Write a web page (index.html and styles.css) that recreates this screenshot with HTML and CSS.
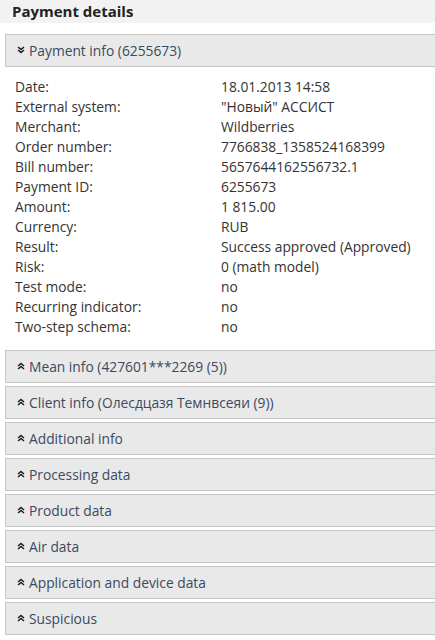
FILE: index.html
```html
<!DOCTYPE html>
<html>
<head>
<meta charset="utf-8">
<link rel="stylesheet" href="styles.css">
</head>
<body>
<div class="page">
  <div class="title">Payment details</div>
  <div class="panels">
    <div class="panel">
      <div class="phead"><svg class="ico" viewBox="0 0 8 8"><path d="M1 1 L4 3.5 L7 1 M1 4 L4 6.5 L7 4" fill="none" stroke="#222" stroke-width="1.6"/></svg><span>Payment info (6255673)</span></div>
      <div class="pbody">
        <div class="row"><span>Date:</span><span>18.01.2013 14:58</span></div>
        <div class="row"><span>External system:</span><span>"Новый" АССИСТ</span></div>
        <div class="row"><span>Merchant:</span><span>Wildberries</span></div>
        <div class="row"><span>Order number:</span><span>7766838_1358524168399</span></div>
        <div class="row"><span>Bill number:</span><span>5657644162556732.1</span></div>
        <div class="row"><span>Payment ID:</span><span>6255673</span></div>
        <div class="row"><span>Amount:</span><span>1 815.00</span></div>
        <div class="row"><span>Currency:</span><span>RUB</span></div>
        <div class="row"><span>Result:</span><span>Success approved (Approved)</span></div>
        <div class="row"><span>Risk:</span><span>0 (math model)</span></div>
        <div class="row"><span>Test mode:</span><span>no</span></div>
        <div class="row"><span>Recurring indicator:</span><span>no</span></div>
        <div class="row"><span>Two-step schema:</span><span>no</span></div>
      </div>
    </div>
    <div class="panel"><div class="phead"><svg class="ico" viewBox="0 0 8 8"><path d="M1 4 L4 1.5 L7 4 M1 7 L4 4.5 L7 7" fill="none" stroke="#222" stroke-width="1.6"/></svg><span>Mean info (427601***2269 (5))</span></div></div>
    <div class="panel"><div class="phead"><svg class="ico" viewBox="0 0 8 8"><path d="M1 4 L4 1.5 L7 4 M1 7 L4 4.5 L7 7" fill="none" stroke="#222" stroke-width="1.6"/></svg><span>Client info (Олесдцазя Темнвсеяи (9))</span></div></div>
    <div class="panel"><div class="phead"><svg class="ico" viewBox="0 0 8 8"><path d="M1 4 L4 1.5 L7 4 M1 7 L4 4.5 L7 7" fill="none" stroke="#222" stroke-width="1.6"/></svg><span>Additional info</span></div></div>
    <div class="panel"><div class="phead"><svg class="ico" viewBox="0 0 8 8"><path d="M1 4 L4 1.5 L7 4 M1 7 L4 4.5 L7 7" fill="none" stroke="#222" stroke-width="1.6"/></svg><span>Processing data</span></div></div>
    <div class="panel"><div class="phead"><svg class="ico" viewBox="0 0 8 8"><path d="M1 4 L4 1.5 L7 4 M1 7 L4 4.5 L7 7" fill="none" stroke="#222" stroke-width="1.6"/></svg><span>Product data</span></div></div>
    <div class="panel"><div class="phead"><svg class="ico" viewBox="0 0 8 8"><path d="M1 4 L4 1.5 L7 4 M1 7 L4 4.5 L7 7" fill="none" stroke="#222" stroke-width="1.6"/></svg><span>Air data</span></div></div>
    <div class="panel"><div class="phead"><svg class="ico" viewBox="0 0 8 8"><path d="M1 4 L4 1.5 L7 4 M1 7 L4 4.5 L7 7" fill="none" stroke="#222" stroke-width="1.6"/></svg><span>Application and device data</span></div></div>
    <div class="panel"><div class="phead"><svg class="ico" viewBox="0 0 8 8"><path d="M1 4 L4 1.5 L7 4 M1 7 L4 4.5 L7 7" fill="none" stroke="#222" stroke-width="1.6"/></svg><span>Suspicious</span></div></div>
  </div>
</div>
</body>
</html>
```
FILE: styles.css
```css
html, body {
  margin: 0;
  padding: 0;
  background: #fff;
  overflow: hidden;
}
body {
  font-family: "Open Sans", "Noto Sans", sans-serif;
  font-size: 13.8px;
  color: #333;
}
.page {
  width: 460px;
}
.title {
  height: 23px;
  background: #f2f2f2;
  padding-left: 12px;
  font-weight: bold;
  font-size: 15px;
  line-height: 23px;
  color: #222;
}
.panels {
  padding: 11px 0 0 5px;
  display: flex;
  flex-direction: column;
  gap: 3px;
}
.phead {
  height: 31px;
  border: 1px solid #c6c6c6;
  background: #e9e9e9;
  display: flex;
  align-items: center;
  padding-left: 11px;
  color: #3b4a5e;
}
.ico {
  width: 8px;
  height: 8px;
  margin-right: 4px;
  margin-top: -2px;
}
.pbody {
  padding: 10px 0 10px 10px;
}
.row {
  display: grid;
  grid-template-columns: 206px auto;
  height: 20px;
  line-height: 20px;
  color: #333;
}
```
